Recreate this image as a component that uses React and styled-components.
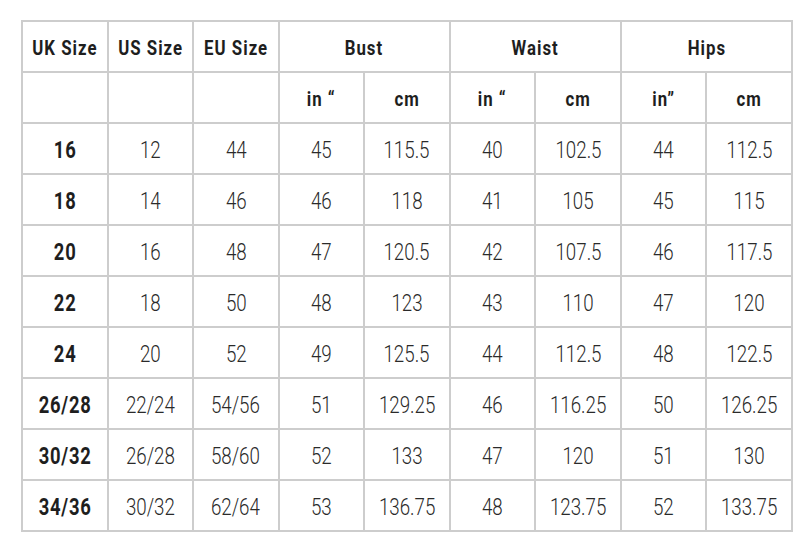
import React from "react";
import styled, { createGlobalStyle } from "styled-components";

const Global = createGlobalStyle`
  html, body { margin: 0; padding: 0; background: #ffffff; }
  body { font-family: Roboto, "Liberation Sans", sans-serif; }
`;

const Page = styled.div`
  padding: 20px 0 0 21px;
  width: 811px;
  height: 550px;
  box-sizing: border-box;
  background: #fff;
`;

const Table = styled.table`
  border-collapse: collapse;
  table-layout: fixed;
  width: 772px;
  border: 2px solid #cdcdcd;
`;

const Row = styled.tr`
  height: 51px;
`;

const Cell = styled.td`
  border: 2px solid #cdcdcd;
  padding: 3px 0 0 0;
  text-align: center;
  vertical-align: middle;
  color: ${(p) => (p.$bold ? "#1e1e1e" : "#2a2a2a")};
  font-family: Roboto, "Liberation Sans", sans-serif;
  font-weight: ${(p) => (p.$bold ? 700 : 300)};
  font-size: ${(p) => p.$size || 24}px;
  letter-spacing: ${(p) => p.$spacing || 0}px;
  line-height: 1;
  white-space: nowrap;
  overflow: visible;
`;

const Squeeze = styled.span`
  display: inline-block;
  transform: scaleX(${(p) => p.$x || 0.8});
  transform-origin: center;
`;

const rows = [
  ["16", "12", "44", "45", "115.5", "40", "102.5", "44", "112.5"],
  ["18", "14", "46", "46", "118", "41", "105", "45", "115"],
  ["20", "16", "48", "47", "120.5", "42", "107.5", "46", "117.5"],
  ["22", "18", "50", "48", "123", "43", "110", "47", "120"],
  ["24", "20", "52", "49", "125.5", "44", "112.5", "48", "122.5"],
  ["26/28", "22/24", "54/56", "51", "129.25", "46", "116.25", "50", "126.25"],
  ["30/32", "26/28", "58/60", "52", "133", "47", "120", "51", "130"],
  ["34/36", "30/32", "62/64", "53", "136.75", "48", "123.75", "52", "133.75"],
];

const Head = ({ children, colSpan, rowSpan }) => (
  <Cell $bold $size={20} $spacing={1.2} colSpan={colSpan} rowSpan={rowSpan}>
    <Squeeze $x={0.84}>{children}</Squeeze>
  </Cell>
);

export default function App() {
  return (
    <>
      <Global />
      <Page>
        <Table>
          <tbody>
            <Row>
              <Head>UK Size</Head>
              <Head>US Size</Head>
              <Head>EU Size</Head>
              <Head colSpan={2}>Bust</Head>
              <Head colSpan={2}>Waist</Head>
              <Head colSpan={2}>Hips</Head>
            </Row>
            <Row>
              <Cell />
              <Cell />
              <Cell />
              <Head>in “</Head>
              <Head>cm</Head>
              <Head>in “</Head>
              <Head>cm</Head>
              <Head>in”</Head>
              <Head>cm</Head>
            </Row>
            {rows.map((r) => (
              <Row key={r[0]}>
                {r.map((v, i) =>
                  i === 0 ? (
                    <Cell key={i} $bold $size={23} $spacing={1}>
                      <Squeeze $x={0.8}>{v}</Squeeze>
                    </Cell>
                  ) : (
                    <Cell key={i} $size={24}>
                      <Squeeze $x={0.78}>{v}</Squeeze>
                    </Cell>
                  )
                )}
              </Row>
            ))}
          </tbody>
        </Table>
      </Page>
    </>
  );
}
